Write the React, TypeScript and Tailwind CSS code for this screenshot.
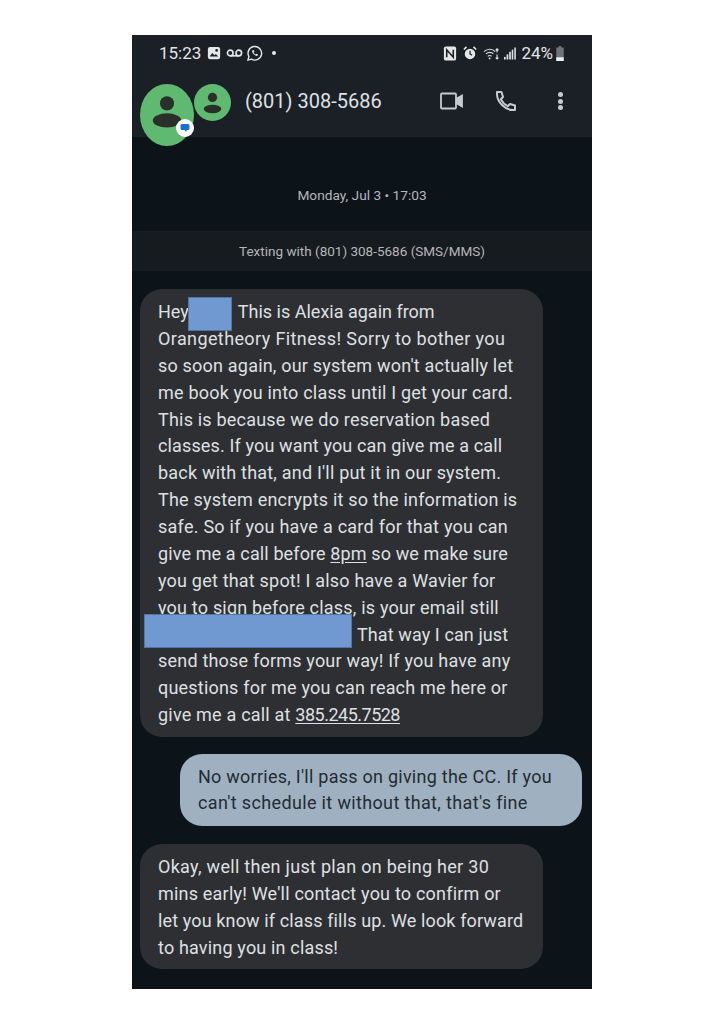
import React from "react";

const font = { fontFamily: '"Roboto", "Noto Sans", sans-serif' };

function BigPerson({ className }: { className: string }) {
  return (
    <svg viewBox="0 0 40 40" preserveAspectRatio="none" className={className}>
      <ellipse cx="20" cy="20" rx="20" ry="20" fill="#5fb971" />
      <ellipse cx="20" cy="12.5" rx="5.2" ry="4.6" fill="#283029" />
      <ellipse cx="20" cy="23.5" rx="10.5" ry="4.6" fill="#283029" />
    </svg>
  );
}

function SmallPerson({ className }: { className: string }) {
  return (
    <svg viewBox="0 0 40 40" className={className}>
      <circle cx="20" cy="20" r="20" fill="#5fb971" />
      <circle cx="20" cy="14.5" r="5" fill="#283029" />
      <ellipse cx="20" cy="27" rx="9.5" ry="4.5" fill="#283029" />
    </svg>
  );
}

function Redact({ className }: { className: string }) {
  return <div className={`absolute bg-[#7099d1] border border-[#4f76a8] ${className}`} />;
}

export default function App() {
  return (
    <div className="w-[724px] h-[1024px] bg-white pt-[35px] flex justify-center" style={font}>
      <div className="w-[460px] h-[954px] bg-[#0c1319] flex flex-col">
        <header className="h-[102px] bg-[#1b2027] text-[#e3e5e7] shrink-0 flex flex-col">
          <div className="h-[36px] flex items-center justify-between pl-[27px] pr-[27px]">
            <div className="flex items-center">
              <span className="text-[17px] leading-[24px] mr-[6px]">15:23</span>
              <svg viewBox="0 0 16 16" className="w-[14px] h-[14px] mr-[5px]">
                <rect x="1" y="1" width="14" height="14" rx="2.5" fill="#e6e7e9" />
                <path d="M3 12l3-4 2.5 2.5L10 9l3 3z" fill="#1b2027" />
                <circle cx="11" cy="5" r="1.5" fill="#1b2027" />
              </svg>
              <svg viewBox="0 0 18 10" fill="none" stroke="#e6e7e9" strokeWidth="1.7" className="w-[17px] h-[10px] mr-[3px]">
                <circle cx="4.5" cy="5" r="3" />
                <circle cx="13.5" cy="5" r="3" />
                <path d="M4.5 8h9" />
              </svg>
              <svg viewBox="0 0 18 18" fill="none" stroke="#e6e7e9" strokeWidth="1.5" className="w-[17px] h-[17px] mr-[9px]">
                <path d="M2 16l1.1-3.7A7.2 7.2 0 1 1 5.8 15z" />
                <path d="M6.5 5.8c-.6 2.5 3.2 6.3 5.7 5.7l.6-1.4-1.8-.9-.8.8c-1-.4-1.7-1.1-2.1-2.1l.8-.8-.9-1.8z" fill="#e6e7e9" stroke="none" />
              </svg>
              <span className="w-[4px] h-[4px] rounded-full bg-[#e6e7e9]" />
            </div>
            <div className="flex items-center">
              <svg viewBox="0 0 14 16" className="w-[14px] h-[15px] mr-[6px]">
                <rect x="0.5" y="0.5" width="13" height="15" rx="2" fill="#e6e7e9" />
                <path d="M3.5 12V4l7 8V4" fill="none" stroke="#1b2027" strokeWidth="1.7" />
              </svg>
              <svg viewBox="0 0 16 16" className="w-[14px] h-[14px] mr-[6px]">
                <circle cx="8" cy="9" r="6" fill="#e6e7e9" />
                <path d="M8 5.5V9l2.5 1.5" fill="none" stroke="#1b2027" strokeWidth="1.4" />
                <path d="M1 4l3-3M15 4l-3-3" stroke="#e6e7e9" strokeWidth="1.8" />
              </svg>
              <svg viewBox="0 0 18 14" fill="none" stroke="#dfe1e3" strokeWidth="1.2" className="w-[17px] h-[13px] mr-[4px]">
                <path d="M1 5c3.5-3.5 9-3.5 12 0M3 7.5c2.5-2.3 6-2.3 8 0M5 10c1.3-1.2 3-1.2 4 0" />
                <circle cx="7" cy="12.3" r="1" fill="#dfe1e3" stroke="none" />
                <path d="M15 2v4M15 8v5M13.5 3.5L15 2l1.5 1.5M13.5 11.5L15 13l1.5-1.5" />
              </svg>
              <svg viewBox="0 0 14 14" className="w-[12px] h-[13px] mr-[5px]" fill="#dfe1e3">
                <rect x="0" y="11" width="2" height="3" />
                <rect x="3" y="8" width="2" height="6" />
                <rect x="6" y="5" width="2" height="9" />
                <rect x="9" y="2.5" width="1.8" height="11.5" />
                <rect x="12" y="0" width="1.8" height="14" />
              </svg>
              <span className="text-[17px] leading-[24px]">24%</span>
              <svg viewBox="0 0 10 16" className="w-[10px] h-[15px] ml-[2px]">
                <path d="M3.5 0h3v1.5H9V16H1V1.5h2.5z" fill="#6f7276" />
                <rect x="1" y="12" width="8" height="4" fill="#eceeef" />
              </svg>
            </div>
          </div>
          <div className="relative flex-1 flex items-center pl-[113px] pr-[29px]">
            <BigPerson className="absolute left-[8px] top-[13px] w-[54px] h-[62px] z-10" />
            <SmallPerson className="absolute left-[62px] top-[13px] w-[37px] h-[37px]" />
            <div className="absolute left-[44px] top-[48px] z-20 w-[18px] h-[18px] rounded-full bg-white flex items-center justify-center">
              <svg viewBox="0 0 12 12" className="w-[12px] h-[12px]">
                <path d="M1.5 3.5A1.5 1.5 0 0 1 3 2h6a1.5 1.5 0 0 1 1.5 1.5v3A1.5 1.5 0 0 1 9 8H8l-1 2-1.5-2H3A1.5 1.5 0 0 1 1.5 6.5z" fill="#1a6fd8" />
              </svg>
            </div>
            <span className="text-[20px] leading-[28px] -mt-[6px] text-[#dfe1e4]">(801) 308-5686</span>
            <div className="ml-auto -mt-[6px] flex items-center">
              <svg viewBox="0 0 24 18" fill="none" stroke="#c8cbce" strokeWidth="1.8" className="w-[24px] h-[18px]">
                <rect x="1" y="1.5" width="15" height="15" rx="1" />
                <path d="M16 7l6-3.5v11L16 11" fill="#c8cbce" />
              </svg>
              <svg viewBox="0 0 22 22" fill="none" stroke="#c8cbce" strokeWidth="2" className="w-[22px] h-[22px] ml-[31px]">
                <path d="M2 2h4.5l1.5 5-2.2 2.2c1.5 3 4 5.5 7 7l2.2-2.2 5 1.5V20h-2C10 20 2 12 2 4z" strokeLinejoin="round" />
              </svg>
              <div className="ml-[41px] flex flex-col gap-[1.5px]">
                <span className="w-[5px] h-[5px] rounded-full bg-[#c8cbce]" />
                <span className="w-[5px] h-[5px] rounded-full bg-[#c8cbce]" />
                <span className="w-[5px] h-[5px] rounded-full bg-[#c8cbce]" />
              </div>
            </div>
          </div>
        </header>

        <div className="h-[94px] shrink-0 flex items-end justify-center pb-[26px] text-[13.7px] leading-[20px] text-[#b4b7ba]">
          Monday, Jul 3 • 17:03
        </div>

        <div className="h-[40px] shrink-0 bg-[#161b20] flex items-center justify-center text-[13.5px] text-[#b4b7ba]">
          Texting with (801) 308-5686 (SMS/MMS)
        </div>

        <div className="relative mt-[18px] ml-[8px] w-[403px] h-[448px] shrink-0 rounded-[22px] bg-[#2d2f32] pl-[18px] pt-[10px] text-[18px] leading-[26.87px] tracking-[0.2px] text-[#dfe0e2] whitespace-nowrap">
          <div className="tracking-normal">Hey<span className="inline-block w-[49px]" />This is Alexia again from</div>
          <div className="tracking-[0.39px]">Orangetheory Fitness! Sorry to bother you</div>
          <div>so soon again, our system won't actually let</div>
          <div>me book you into class until I get your card.</div>
          <div>This is because we do reservation based</div>
          <div className="tracking-[0.14px]">classes. If you want you can give me a call</div>
          <div>back with that, and I'll put it in our system.</div>
          <div>The system encrypts it so the information is</div>
          <div className="tracking-[0.25px]">safe. So if you have a card for that you can</div>
          <div className="tracking-[0.12px]">give me a call before <span className="underline underline-offset-2">8pm</span> so we make sure</div>
          <div>you get that spot! I also have a Wavier for</div>
          <div>you to sign before class, is your email still</div>
          <div className="tracking-[0.1px]"><span className="inline-block w-[199px]" />That way I can just</div>
          <div>send those forms your way! If you have any</div>
          <div>questions for me you can reach me here or</div>
          <div>give me a call at <span className="underline underline-offset-2 tracking-[-0.5px]">385.245.7528</span></div>
          <Redact className="left-[48px] top-[8px] w-[44px] h-[34px]" />
          <Redact className="left-[4px] top-[325px] w-[208px] h-[34px]" />
        </div>

        <div className="mt-[17px] ml-[48px] w-[402px] h-[72px] shrink-0 rounded-[22px] bg-[#9fb1c0] pl-[18px] pt-[10px] text-[18px] leading-[26px] tracking-[0.25px] text-[#232b33] whitespace-nowrap">
          <div>No worries, I'll pass on giving the CC. If you</div>
          <div className="tracking-[0.35px]">can't schedule it without that, that's fine</div>
        </div>

        <div className="mt-[18px] ml-[8px] w-[403px] h-[125px] shrink-0 rounded-[22px] bg-[#2d2f32] pl-[18px] pt-[9px] text-[18px] leading-[27px] tracking-[0.17px] text-[#dfe0e2] whitespace-nowrap">
          <div className="tracking-[0.3px]">Okay, well then just plan on being her 30</div>
          <div className="tracking-[0.2px]">mins early! We'll contact you to confirm or</div>
          <div className="tracking-[0.13px]">let you know if class fills up. We look forward</div>
          <div>to having you in class!</div>
        </div>
      </div>
    </div>
  );
}
